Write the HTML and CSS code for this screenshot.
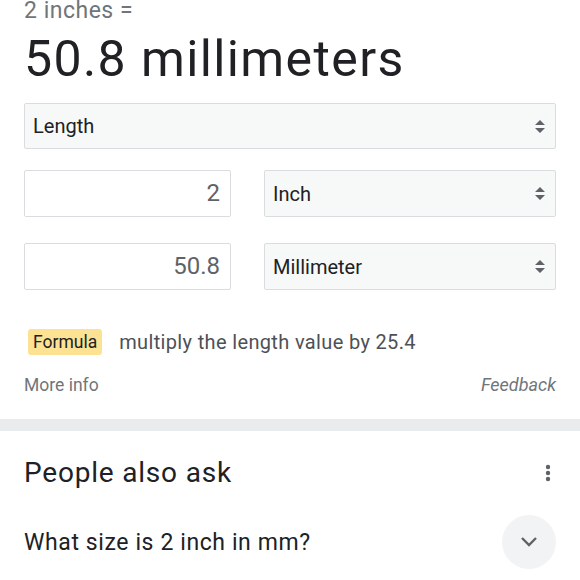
FILE: index.html
```html
<!DOCTYPE html>
<html lang="en">
<head>
  <meta charset="UTF-8" />
  <meta name="viewport" content="width=device-width, initial-scale=1.0"/>
  <title>2 inches to mm</title>
  <link rel="stylesheet" href="styles.css">
</head>
<body>
  <div class="converter">
    <div class="query">2 inches =</div>
    <div class="result">50.8 millimeters</div>

    <!-- Unit type -->
    <div class="select wide">
      <span>Length</span>
      <svg class="arrows" width="10" height="13" viewBox="0 0 10 13"><path d="M5 0 L10 5 L0 5 Z M0 8 L10 8 L5 13 Z" fill="#5f6368"/></svg>
    </div>

    <div class="row first">
      <div class="value">2</div>
      <div class="select">
        <span>Inch</span>
        <svg class="arrows" width="10" height="13" viewBox="0 0 10 13"><path d="M5 0 L10 5 L0 5 Z M0 8 L10 8 L5 13 Z" fill="#5f6368"/></svg>
      </div>
    </div>

    <div class="row second">
      <div class="value">50.8</div>
      <div class="select">
        <span>Millimeter</span>
        <svg class="arrows" width="10" height="13" viewBox="0 0 10 13"><path d="M5 0 L10 5 L0 5 Z M0 8 L10 8 L5 13 Z" fill="#5f6368"/></svg>
      </div>
    </div>

    <div class="formula">
      <span class="badge">Formula</span>
      <span class="formula-text">multiply the length value by 25.4</span>
    </div>

    <div class="links">
      <a href="#">More info</a>
      <a href="#" class="feedback">Feedback</a>
    </div>
  </div>

  <div class="divider"></div>

  <div class="paa">
    <div class="paa-head">
      <h2>People also ask</h2>
      <svg class="more" width="6" height="18" viewBox="0 0 6 18">
        <circle cx="3" cy="3" r="2.2" fill="#5f6368"/>
        <circle cx="3" cy="9" r="2.2" fill="#5f6368"/>
        <circle cx="3" cy="15" r="2.2" fill="#5f6368"/>
      </svg>
    </div>
    <div class="question">
      <span>What size is 2 inch in mm?</span>
      <div class="expand">
        <svg width="18" height="12" viewBox="0 0 18 12"><path d="M2 2 L9 9 L16 2" fill="none" stroke="#5f6368" stroke-width="2.4"/></svg>
      </div>
    </div>
  </div>
</body>
</html>
```

FILE: styles.css
```css
body {
  margin: 0;
  font-family: Roboto, "Liberation Sans", Arial, sans-serif;
  color: #202124;
  background: #fff;
}

.converter {
  padding: 0 24px;
}

.query {
  font-size: 23px;
  line-height: 22px;
  letter-spacing: 0.5px;
  color: #70757a;
}

.result {
  font-size: 50px;
  line-height: 60px;
  letter-spacing: 1.4px;
  margin-top: 7px;
}

.select {
  display: flex;
  align-items: center;
  justify-content: space-between;
  box-sizing: border-box;
  height: 47px;
  padding: 0 10px 0 8px;
  background: #f7f8f8;
  border: 1px solid #dadce0;
  border-radius: 2px;
  font-size: 20px;
  color: #202124;
  flex: 1;
}

.select.wide {
  height: 46px;
  margin-top: 14px;
}

.arrows {
  flex: none;
}

.row {
  display: flex;
  gap: 33px;
}

.row.first {
  margin-top: 21px;
}

.row.second {
  margin-top: 26px;
}

.value {
  box-sizing: border-box;
  width: 207px;
  height: 47px;
  padding: 0 10px;
  border: 1px solid #dadce0;
  border-radius: 2px;
  text-align: right;
  font-size: 24px;
  line-height: 45px;
  color: #5f6368;
}

.formula {
  display: flex;
  align-items: center;
  height: 26px;
  margin-top: 39px;
  padding-left: 4px;
}

.badge {
  background: #fde293;
  border-radius: 3px;
  padding: 0 5px;
  font-size: 17.5px;
  line-height: 26px;
  color: #202124;
}

.formula-text {
  margin-left: 17px;
  font-size: 20px;
  letter-spacing: 0.35px;
  color: #4d5156;
}

.links {
  display: flex;
  justify-content: space-between;
  margin-top: 19px;
  font-size: 17.5px;
  line-height: 22px;
}

.links a {
  color: #70757a;
  text-decoration: none;
}

.links .feedback {
  font-size: 18px;
  font-style: italic;
}

.divider {
  height: 12px;
  margin-top: 23px;
  background: #eaebed;
}

.paa {
  padding: 0 24px;
}

.paa-head {
  display: flex;
  align-items: center;
  justify-content: space-between;
  margin-top: 24px;
}

.paa-head h2 {
  margin: 0;
  font-size: 28px;
  line-height: 36px;
  letter-spacing: 0.8px;
  font-weight: 400;
}

.more {
  margin-right: 5px;
}

.question {
  display: flex;
  align-items: center;
  justify-content: space-between;
  margin-top: 24px;
  font-size: 23px;
  letter-spacing: 0.6px;
}

.expand {
  width: 54px;
  height: 54px;
  border-radius: 50%;
  background: #f1f3f4;
  display: flex;
  align-items: center;
  justify-content: center;
}
```
